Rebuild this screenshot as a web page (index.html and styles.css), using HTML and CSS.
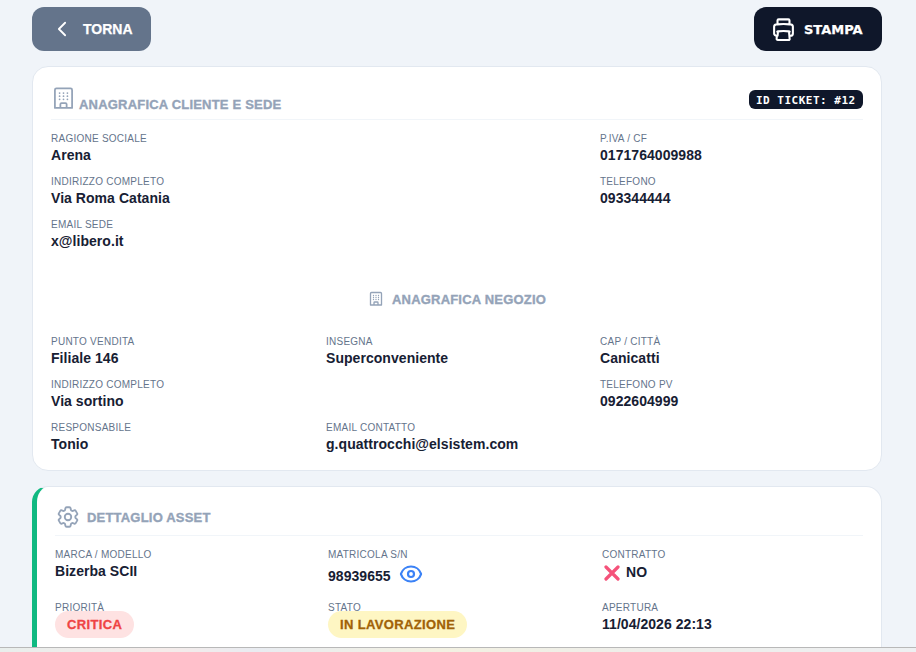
FILE: index.html
```html
<!DOCTYPE html>
<html lang="it">
<head>
<meta charset="utf-8">
<title>Ticket</title>
<link rel="stylesheet" href="styles.css">
</head>
<body>
<div class="page">
  <header class="topbar">
    <button class="btn btn-back">
      <svg class="ico-back" viewBox="0 0 24 24" fill="none" stroke="currentColor" stroke-width="2.2" stroke-linecap="round" stroke-linejoin="round"><path d="M15.75 19.5 8.25 12l7.5-7.5"/></svg>
      <span>TORNA</span>
    </button>
    <button class="btn btn-print">
      <svg class="ico-print" viewBox="0 0 24 24" fill="none" stroke="currentColor" stroke-width="2" stroke-linecap="round" stroke-linejoin="round"><path d="M6.7 13.8c-.24.03-.48.06-.72.1m.72-.1a42.4 42.4 0 0 1 10.56 0m-10.56 0L6.34 18m10.92-4.2c.24.03.48.06.72.1m-.72-.1.36 4.2m0 0 .24 2.73A1.13 1.13 0 0 1 17.48 22H6.52a1.13 1.13 0 0 1-1.12-1.27L5.66 18m11.96 0h1.13A2.25 2.25 0 0 0 21 15.75V9.46c0-1.08-.77-2.01-1.84-2.17a48.4 48.4 0 0 0-1.41-.2M5.66 18H5.25A2.25 2.25 0 0 1 3 15.75V9.46c0-1.08.77-2.01 1.84-2.17.47-.07.94-.14 1.41-.2m11.5 0a48.5 48.5 0 0 0-11.5 0m11.5 0V3.38C17.75 2.76 17.25 2.25 16.63 2.25H7.38C6.76 2.25 6.25 2.76 6.25 3.38v3.71"/></svg>
      <span>STAMPA</span>
    </button>
  </header>

  <section class="card card-main">
    <div class="section-head">
      <h2 class="section-title">
        <svg class="ico-building" viewBox="0 0 24 24" fill="none" stroke="currentColor" stroke-width="1.7" stroke-linecap="round" stroke-linejoin="round"><path d="M3.75 21V3.75A1.5 1.5 0 0 1 5.25 2.25h13.5a1.5 1.5 0 0 1 1.5 1.5V21M3.75 21h16.5M9 21v-3.375c0-.621.504-1.125 1.125-1.125h3.75c.621 0 1.125.504 1.125 1.125V21M8.25 6.75h.01M12 6.75h.01M15.75 6.75h.01M8.25 9.75h.01M12 9.75h.01M15.75 9.75h.01M8.25 12.75h.01M12 12.75h.01M15.75 12.75h.01"/></svg>
        <span class="heavy title-text">ANAGRAFICA CLIENTE E SEDE</span>
      </h2>
      <span class="ticket-id">ID TICKET: #12</span>
    </div>
    <div class="grid grid-client">
      <div class="field"><div class="label">RAGIONE SOCIALE</div><div class="value">Arena</div></div>
      <div class="field col-3"><div class="label">P.IVA / CF</div><div class="value">0171764009988</div></div>
      <div class="field"><div class="label">INDIRIZZO COMPLETO</div><div class="value">Via Roma Catania</div></div>
      <div class="field col-3"><div class="label">TELEFONO</div><div class="value">093344444</div></div>
      <div class="field"><div class="label">EMAIL SEDE</div><div class="value">x@libero.it</div></div>
    </div>
    <h3 class="sub-title">
      <svg class="ico-building-sm" viewBox="0 0 24 24" fill="none" stroke="currentColor" stroke-width="2" stroke-linecap="round" stroke-linejoin="round"><path d="M3.75 21V3.75A1.5 1.5 0 0 1 5.25 2.25h13.5a1.5 1.5 0 0 1 1.5 1.5V21M3.75 21h16.5M9 21v-3.375c0-.621.504-1.125 1.125-1.125h3.75c.621 0 1.125.504 1.125 1.125V21M8.25 6.75h.01M12 6.75h.01M15.75 6.75h.01M8.25 9.75h.01M12 9.75h.01M15.75 9.75h.01M8.25 12.75h.01M12 12.75h.01M15.75 12.75h.01"/></svg>
      <span class="heavy">ANAGRAFICA NEGOZIO</span>
    </h3>
    <div class="grid">
      <div class="field"><div class="label">PUNTO VENDITA</div><div class="value">Filiale 146</div></div>
      <div class="field"><div class="label">INSEGNA</div><div class="value">Superconveniente</div></div>
      <div class="field"><div class="label">CAP / CITTÀ</div><div class="value">Canicatti</div></div>
      <div class="field span-2"><div class="label">INDIRIZZO COMPLETO</div><div class="value">Via sortino</div></div>
      <div class="field"><div class="label">TELEFONO PV</div><div class="value">0922604999</div></div>
      <div class="field"><div class="label">RESPONSABILE</div><div class="value">Tonio</div></div>
      <div class="field span-2"><div class="label">EMAIL CONTATTO</div><div class="value">g.quattrocchi@elsistem.com</div></div>
    </div>
  </section>

  <section class="card card-asset">
    <h2 class="asset-title">
      <svg class="ico-gear" viewBox="0 0 24 24" fill="none" stroke="currentColor" stroke-width="1.7" stroke-linecap="round" stroke-linejoin="round"><path d="M9.594 3.94c.09-.542.56-.94 1.11-.94h2.593c.55 0 1.02.398 1.11.94l.213 1.281c.063.374.313.686.645.87.074.04.147.083.22.127.324.196.72.257 1.075.124l1.217-.456a1.125 1.125 0 0 1 1.37.49l1.296 2.247a1.125 1.125 0 0 1-.26 1.431l-1.003.827c-.293.24-.438.613-.431.992a6.759 6.759 0 0 1 0 .255c-.007.378.138.75.43.99l1.005.828c.424.35.534.954.26 1.43l-1.298 2.247a1.125 1.125 0 0 1-1.369.491l-1.217-.456c-.355-.133-.75-.072-1.076.124a6.57 6.57 0 0 1-.22.128c-.331.183-.581.495-.644.869l-.213 1.28c-.09.543-.56.941-1.11.941h-2.594c-.55 0-1.02-.398-1.11-.94l-.213-1.281c-.062-.374-.312-.686-.644-.87a6.52 6.52 0 0 1-.22-.127c-.325-.196-.72-.257-1.076-.124l-1.217.456a1.125 1.125 0 0 1-1.369-.49l-1.297-2.247a1.125 1.125 0 0 1 .26-1.431l1.004-.827c.292-.24.437-.613.43-.992a6.932 6.932 0 0 1 0-.255c.007-.378-.138-.75-.43-.99l-1.004-.828a1.125 1.125 0 0 1-.26-1.43l1.297-2.247a1.125 1.125 0 0 1 1.37-.491l1.216.456c.356.133.751.072 1.076-.124.072-.044.146-.087.22-.128.332-.183.582-.495.644-.869l.214-1.281Z"/><path d="M15 12a3 3 0 1 1-6 0 3 3 0 0 1 6 0Z"/></svg>
      <span class="heavy">DETTAGLIO ASSET</span>
    </h2>
    <div class="grid grid-asset">
      <div class="field"><div class="label">MARCA / MODELLO</div><div class="value">Bizerba SCII</div></div>
      <div class="field"><div class="label">MATRICOLA S/N</div><div class="value value-icon">98939655
        <svg class="ico-eye" viewBox="0 0 24 24" fill="none" stroke="currentColor" stroke-width="2.2" stroke-linecap="round" stroke-linejoin="round"><path d="M2.036 12.322a1.012 1.012 0 0 1 0-.639C3.423 7.51 7.36 4.5 12 4.5c4.638 0 8.573 3.007 9.963 7.178.07.207.07.431 0 .639C20.577 16.49 16.64 19.5 12 19.5c-4.638 0-8.573-3.007-9.964-7.178Z"/><path d="M15 12a3 3 0 1 1-6 0 3 3 0 0 1 6 0Z"/></svg>
      </div></div>
      <div class="field"><div class="label">CONTRATTO</div><div class="value value-no">
        <svg class="ico-x" viewBox="0 0 16 16" fill="none" stroke="currentColor" stroke-width="3.2" stroke-linecap="round"><path d="M2 2 14 14M14 2 2 14"/></svg>
        NO</div></div>
      <div class="field"><div class="label">PRIORITÀ</div><span class="pill pill-red">CRITICA</span></div>
      <div class="field"><div class="label">STATO</div><span class="pill pill-yellow">IN LAVORAZIONE</span></div>
      <div class="field"><div class="label">APERTURA</div><div class="value">11/04/2026 22:13</div></div>
    </div>
  </section>
</div>
<div class="bottom-edge"></div>
</body>
</html>
```
FILE: styles.css
```css
* { box-sizing: border-box; }
html, body { margin: 0; height: 652px; overflow: hidden; }
body {
  background: #f0f4f9;
  font-family: "Liberation Sans", Arial, sans-serif;
  color: #1e293b;
}
.page { padding: 7px 34px 0 32px; height: 652px; overflow: hidden; }
.topbar { display: flex; justify-content: space-between; align-items: center; height: 44px; }
.btn {
  display: inline-flex; align-items: center; height: 44px; border: 0; border-radius: 12px;
  color: #fff; font-family: inherit; font-weight: 700; font-size: 14px; padding: 0;
  -webkit-text-stroke: .25px currentColor;
}
.btn-back { width: 119px; background: #64748b; padding-left: 20px; gap: 11px; }
.ico-back { width: 20px; height: 20px; }
.btn-print { width: 128px; background: #0f172a; padding-left: 17px; gap: 8px; font-family: "DejaVu Sans", sans-serif; font-size: 13px; }
.ico-print { width: 25px; height: 25px; }
.card { background: #fff; border: 1px solid #e2e8f0; border-radius: 16px; }
.card-main { margin-top: 15px; height: 405px; padding: 13px 18px 0 18px; }
.section-head { display: flex; justify-content: space-between; align-items: flex-end; height: 40px; border-bottom: 1px solid #f1f5f9; padding-bottom: 6px; }
.section-title { display: flex; align-items: flex-end; gap: 3px; margin: 0 0 0 2px; font-size: 13px; font-weight: 700; color: #94a3b8; line-height: 15px; }
.heavy { font-family: "Liberation Sans", Arial, sans-serif; font-size: 13px; font-weight: 700; letter-spacing: .2px; -webkit-text-stroke: .35px currentColor; }
.title-text { margin-bottom: 1px; }
.ico-building { width: 25px; height: 25px; margin-left: -2px; margin-bottom: 2px; }
.ticket-id { background: #0f172a; color: #fff; font-family: "DejaVu Sans Mono", monospace; font-weight: 700; font-size: 11px; letter-spacing: .5px; border-radius: 6px; height: 19px; line-height: 21px; padding: 0 7px; margin-bottom: 4px; width: 114px; white-space: nowrap; }
.grid { display: grid; grid-template-columns: 275px 274px 1fr; row-gap: 10px; }
.grid-client { margin-top: 12px; }
.col-3 { grid-column: 3; }
.span-2 { grid-column: span 2; }
.field { min-height: 33px; }
.label { font-size: 10px; line-height: 14px; color: #64748b; letter-spacing: .25px; }
.value { font-size: 14px; font-weight: 700; line-height: 19px; color: #172033; letter-spacing: .05px; }
.sub-title { display: flex; align-items: center; justify-content: center; gap: 8px; margin: 39px 0 27px; height: 18px; color: #94a3b8; }
.ico-building-sm { width: 16px; height: 16px; }
.card-asset { margin-top: 15px; height: 300px; border-left: 5px solid #10b981; padding: 14px 18px 0 18px; }
.asset-title { display: flex; align-items: center; gap: 6px; margin: 0; height: 35px; padding-bottom: 2px; border-bottom: 1px solid #f1f5f9; color: #94a3b8; }
.ico-gear { width: 26px; height: 26px; }
.grid-asset { grid-template-columns: 273px 274px 1fr; margin-top: 12px; row-gap: 15px; }
.value-icon { display: flex; align-items: center; gap: 8px; margin-top: 4px; }
.ico-eye { width: 24px; height: 24px; color: #3b82f6; margin-top: -4px; }
.value-no { display: flex; align-items: center; gap: 6px; margin-top: 1px; padding-left: 2px; }
.ico-x { width: 16px; height: 16px; color: #f5527a; }
.pill { display: inline-block; height: 27px; line-height: 27px; border-radius: 14px; padding: 0 12px; font-size: 13px; font-weight: 700; letter-spacing: .35px; -webkit-text-stroke: .3px currentColor; margin-top: -4px; position: relative; }
.pill-red { background: #fee2e2; color: #ef4444; }
.pill-yellow { background: #fef6c3; color: #a16207; }
.bottom-edge {
  position: fixed; left: 0; right: 0; bottom: 0; height: 5px; border-top: 1px solid #b8b8b8;
  background: linear-gradient(90deg, #e9eeec, #f5ecea 18%, #e9ecf1 28%, #f3f1e2 48%, #eeeeea 70%, #eef0f2);
}
```
